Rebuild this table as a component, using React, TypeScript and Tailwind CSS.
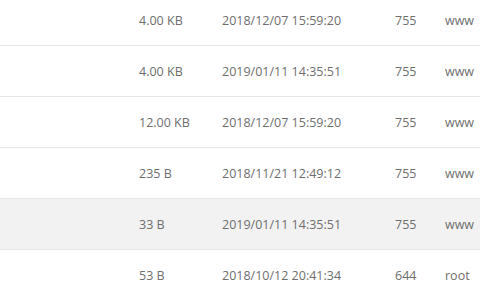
import React from 'react';

interface FileRow {
  size: string;
  mtime: string;
  perm: string;
  owner: string;
  active?: boolean;
}

const rows: FileRow[] = [
  { size: '4.00 KB', mtime: '2018/12/07 15:59:20', perm: '755', owner: 'www' },
  { size: '4.00 KB', mtime: '2019/01/11 14:35:51', perm: '755', owner: 'www' },
  { size: '12.00 KB', mtime: '2018/12/07 15:59:20', perm: '755', owner: 'www' },
  { size: '235 B', mtime: '2018/11/21 12:49:12', perm: '755', owner: 'www' },
  { size: '33 B', mtime: '2019/01/11 14:35:51', perm: '755', owner: 'www', active: true },
  { size: '53 B', mtime: '2018/10/12 20:41:34', perm: '644', owner: 'root' },
];

export default function App() {
  return (
    <div
      className="w-[480px] h-[300px] overflow-hidden bg-white text-[12.5px] text-[#6e6e6e]"
      style={{ fontFamily: '"Open Sans", "Noto Sans", sans-serif' }}
    >
      <div className="-mt-[5px]">
        {rows.map((r, i) => (
          <div
            key={i}
            className={`grid grid-cols-[139px_83px_173px_50px_1fr] items-center h-[51px] pt-[2px] border-b border-[#e6e6e6] ${
              r.active ? 'bg-[#f2f2f2]' : 'bg-white'
            }`}
          >
            {/* name column is empty in this view */}
            <span></span>
            <span>{r.size}</span>
            <span>{r.mtime}</span>
            <span>{r.perm}</span>
            <span>{r.owner}</span>
          </div>
        ))}
      </div>
    </div>
  );
}
